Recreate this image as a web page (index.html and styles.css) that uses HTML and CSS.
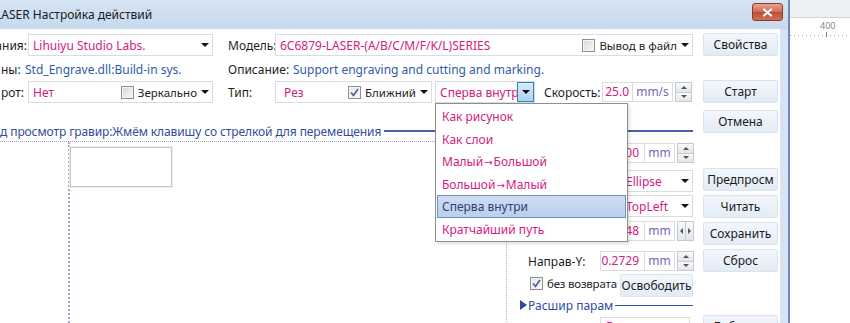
FILE: index.html
```html
<!DOCTYPE html>
<html lang="ru">
<head>
    <meta charset="UTF-8">
    <title>LASER Настройка действий</title>
    <link rel="stylesheet" href="styles.css">
</head>
<body>
    <div class="dialog">
        <div class="titlebar">
            <span class="title">LASER Настройка действий</span>
            <button class="close">
                <svg width="11" height="9" viewBox="0 0 11 9"><path d="M2 1.5 L9 7.5 M9 1.5 L2 7.5" stroke="#fff" stroke-width="2.2" stroke-linecap="round"/></svg>
            </button>
        </div>
        <div class="client">
            <div class="main">
                <div class="row row-1">
                    <span class="lbl lbl-first"><span>ания:</span></span>
                    <div class="combo combo-left">
                        <span class="val">Lihuiyu Studio Labs.</span>
                        <span class="arrow"></span>
                    </div>
                    <span class="lbl lbl-mid">Модель:</span>
                    <div class="combo combo-model">
                        <span class="val">6C6879-LASER-(A/B/C/M/F/K/L)SERIES</span>
                        <span class="check"><span class="box"></span>Вывод в файл</span>
                        <span class="arrow"></span>
                    </div>
                </div>
                <div class="row row-2">
                    <span class="lbl lbl-short">ны:</span>
                    <span class="info info-engine">Std_Engrave.dll:Build-in sys.</span>
                    <span class="lbl lbl-desc">Описание:</span>
                    <span class="info">Support engraving and cutting and marking.</span>
                </div>
                <div class="row row-3">
                    <span class="lbl lbl-first"><span>рот:</span></span>
                    <div class="combo combo-left">
                        <span class="val">Нет</span>
                        <span class="check"><span class="box"></span>Зеркально</span>
                        <span class="arrow"></span>
                    </div>
                    <span class="lbl lbl-mid">Тип:</span>
                    <div class="combo combo-type">
                        <span class="val">Рез</span>
                        <span class="check"><span class="box checked"><svg width="9" height="9" viewBox="0 0 9 9"><path d="M1 4.5 L3.5 7.5 L8 1" fill="none" stroke="#4b5f8c" stroke-width="1.6"/></svg></span>Ближний</span>
                        <span class="arrow"></span>
                    </div>
                    <div class="combo combo-order">
                        <span class="val">Сперва внутри</span>
                        <span class="drop-btn"><span class="arrow"></span></span>
                        <ul class="drop-list">
                            <li>Как рисунок</li>
                            <li>Как слои</li>
                            <li>Малый<span class="arr">→</span>Большой</li>
                            <li>Большой<span class="arr">→</span>Малый</li>
                            <li class="selected">Сперва внутри</li>
                            <li>Кратчайший путь</li>
                        </ul>
                    </div>
                    <span class="lbl lbl-speed">Скорость:</span>
                    <span class="num num-speed">25.0</span>
                    <span class="unit unit-speed">mm/s</span>
                    <span class="spin"><i class="up"></i><i class="down"></i></span>
                </div>
                <div class="group-head">
                    <span class="group-title">д просмотр гравир:Жмём клавишу со стрелкой для перемещения</span>
                    <span class="group-line"></span>
                </div>
                <div class="group-body">
                    <div class="canvas">
                        <div class="canvas-margin"></div>
                        <div class="canvas-area">
                            <div class="work-rect"></div>
                        </div>
                    </div>
                    <div class="panel">
                        <div class="prow prow-a">
                            <span class="plbl"></span>
                            <span class="num">100.00</span>
                            <span class="unit">mm</span>
                            <span class="spin"><i class="up"></i><i class="down"></i></span>
                        </div>
                        <div class="prow prow-b">
                            <span class="plbl plbl-wide"></span>
                            <div class="combo combo-small">
                                <span class="val">Ellipse</span>
                                <span class="arrow"></span>
                            </div>
                        </div>
                        <div class="prow prow-c">
                            <span class="plbl plbl-wide"></span>
                            <div class="combo combo-small">
                                <span class="val">TopLeft</span>
                                <span class="arrow"></span>
                            </div>
                        </div>
                        <div class="prow prow-d">
                            <span class="plbl"></span>
                            <span class="num">0.0548</span>
                            <span class="unit">mm</span>
                            <span class="spin spin-h"><i class="left"></i><i class="right"></i></span>
                        </div>
                        <div class="prow prow-e">
                            <span class="plbl">Направ-Y:</span>
                            <span class="num">0.2729</span>
                            <span class="unit">mm</span>
                            <span class="spin"><i class="up"></i><i class="down"></i></span>
                        </div>
                        <div class="prow prow-f">
                            <span class="check"><span class="box checked"><svg width="9" height="9" viewBox="0 0 9 9"><path d="M1 4.5 L3.5 7.5 L8 1" fill="none" stroke="#4b5f8c" stroke-width="1.6"/></svg></span>без возврата</span>
                            <button class="btn btn-free">Освободить</button>
                        </div>
                        <div class="prow prow-g">
                            <span class="tri"></span>
                            <span class="sub-title">Расшир парам</span>
                            <span class="sub-line"></span>
                        </div>
                        <div class="prow prow-h">
                            <span class="plbl">Мощн:</span>
                            <span class="num num-wide">Выкл</span>
                        </div>
                    </div>
                </div>
            </div>
            <div class="buttons">
                <button class="btn btn-props">Свойства</button>
                <button class="btn btn-start">Старт</button>
                <button class="btn btn-cancel">Отмена</button>
                <button class="btn btn-preview">Предпросм</button>
                <button class="btn">Читать</button>
                <button class="btn">Сохранить</button>
                <button class="btn">Сброс</button>
                <button class="btn btn-add">Добавить</button>
            </div>
        </div>
    </div>
    <div class="view">
        <div class="view-top"></div>
        <div class="ruler"><span class="ruler-num">400</span></div>
        <div class="view-canvas"></div>
    </div>
</body>
</html>
```

FILE: styles.css
```css
* {
    box-sizing: border-box;
}
body {
    margin: 0;
    width: 850px;
    height: 323px;
    overflow: hidden;
    display: flex;
    background: #fff;
    font-family: "Noto Sans", "Open Sans", sans-serif;
    font-size: 12px;
    color: #1e1e1e;
}

/* Window frame */
.dialog {
    width: 790px;
    height: 323px;
    flex: none;
    display: flex;
    flex-direction: column;
    background: #d5e3f2;
    border-right: 2px solid #6a8cb3;
}
.titlebar {
    height: 29px;
    flex: none;
    display: flex;
    justify-content: space-between;
    align-items: flex-start;
    background: linear-gradient(#d6e4f3, #c6d9ee);
    padding-right: 5px;
}
.title {
    margin-left: -5px;
    margin-top: 6px;
    font-size: 12px;
    color: #1a1a1a;
}
.close {
    width: 31px;
    height: 18px;
    margin-top: 3px;
    padding: 0;
    border: 1px solid #8e3b2b;
    border-radius: 3px;
    background: linear-gradient(#e3a492, #cf6b55 50%, #bf4d37 51%, #cf7258);
    display: flex;
    align-items: center;
    justify-content: center;
}
.client {
    flex: 1;
    display: flex;
    background: #fff;
    margin-right: 8px;
    overflow: hidden;
}
.main {
    width: 695px;
    flex: none;
    display: flex;
    flex-direction: column;
}

/* Top rows */
.row {
    display: flex;
    align-items: center;
    flex: none;
}
.row-1 {
    margin-top: 5px;
    height: 22px;
}
.row-2 {
    margin-top: 4px;
    height: 19px;
}
.row-3 {
    margin-top: 2px;
    height: 22px;
}
.lbl {
    flex: none;
    white-space: nowrap;
}
/* labels cut by the left edge of the shot: text ends at the box edge */
.lbl-first {
    width: 28px;
    display: flex;
    justify-content: flex-end;
    padding-right: 1px;
}
.row-3 .lbl-first {
    padding-right: 4px;
}
.lbl-short {
    width: 25px;
    padding-left: 1px;
}
.lbl-mid {
    width: 47px;
    margin-left: 15px;
}
.lbl-desc {
    width: 65px;
}
.lbl-speed {
    width: 58px;
    margin-left: 9px;
}
.info {
    color: #2f5ca8;
    white-space: nowrap;
}
.info-engine {
    width: 203px;
}

.combo {
    height: 22px;
    display: flex;
    align-items: center;
    border: 1px solid #d9dce2;
    background: #fff;
    flex: none;
    position: relative;
}
.combo .val {
    flex: 1;
    color: #d3207f;
    padding-left: 4px;
    white-space: nowrap;
    overflow: hidden;
}
.arrow {
    width: 0;
    height: 0;
    border-left: 4px solid transparent;
    border-right: 4px solid transparent;
    border-top: 4px solid #111;
    margin: 0 3px 0 4px;
    flex: none;
}
.combo-left {
    width: 185px;
}
.combo-model {
    width: 418px;
}
.combo-type {
    width: 157px;
}
.combo-type .val {
    padding-left: 8px;
}
.combo-order {
    width: 100px;
    margin-left: 3px;
}
.combo-order .val {
    padding-left: 4px;
}
.drop-btn {
    width: 17px;
    height: 20px;
    flex: none;
    display: flex;
    align-items: center;
    justify-content: center;
    background: linear-gradient(#d9ecfc, #a9d0f1);
    border: 1px solid #3c7fb1;
}
.drop-btn .arrow {
    margin: 0;
}

.check {
    display: flex;
    align-items: center;
    white-space: nowrap;
    flex: none;
    font-size: 11.5px;
}
.box {
    width: 13px;
    height: 13px;
    border: 1px solid #8f8f8f;
    background: linear-gradient(135deg, #d6d6d6, #fbfbfb);
    box-shadow: inset 0 0 0 1px #f4f4f4;
    margin-right: 4px;
    display: flex;
    align-items: center;
    justify-content: center;
}
.box.checked {
    background: linear-gradient(135deg, #e2e4ea, #fdfdfd);
}

.num {
    width: 45px;
    height: 20px;
    border: 1px solid #dcdcdc;
    color: #d3207f;
    text-align: right;
    padding-right: 5px;
    line-height: 18px;
    flex: none;
    white-space: nowrap;
    overflow: hidden;
}
.num-speed {
    width: 31px;
    padding-right: 3px;
}
.num-wide {
    width: 90px;
    text-align: left;
    padding-left: 5px;
}
.unit {
    width: 30px;
    height: 20px;
    border: 1px solid #dcdcdc;
    border-left: none;
    color: #7a63b5;
    text-align: center;
    line-height: 18px;
    flex: none;
}
.unit-speed {
    width: 40px;
}
.spin {
    width: 17px;
    height: 20px;
    margin-left: 2px;
    display: flex;
    flex-direction: column;
    flex: none;
    border: 1px solid #c3c9d1;
}
.spin i {
    flex: 1;
    display: flex;
    align-items: center;
    justify-content: center;
    background: linear-gradient(#fafafa, #e3e6ea);
}
.spin i + i {
    border-top: 1px solid #c3c9d1;
}
.spin .up::after {
    content: "";
    border-left: 3px solid transparent;
    border-right: 3px solid transparent;
    border-bottom: 3px solid #555;
}
.spin .down::after {
    content: "";
    border-left: 3px solid transparent;
    border-right: 3px solid transparent;
    border-top: 3px solid #555;
}
.spin-h {
    flex-direction: row;
}
.spin-h i + i {
    border-top: none;
    border-left: 1px solid #c3c9d1;
}
.spin-h .left::after {
    content: "";
    border-top: 3px solid transparent;
    border-bottom: 3px solid transparent;
    border-right: 3px solid #555;
}
.spin-h .right::after {
    content: "";
    border-top: 3px solid transparent;
    border-bottom: 3px solid transparent;
    border-left: 3px solid #555;
}

/* Dropdown popup */
.drop-list {
    position: absolute;
    left: -1px;
    top: 21px;
    width: 193px;
    height: 139px;
    margin: 0;
    padding: 1px 0 0;
    list-style: none;
    background: #fff;
    border: 1px solid #8e8e8e;
    box-shadow: 2px 2px 3px rgba(0, 0, 0, 0.12);
    z-index: 10;
}
.drop-list li {
    height: 22.6px;
    line-height: 22px;
    padding-left: 4px;
    margin: 0 1px;
    color: #d3207f;
    border: 1px solid transparent;
    white-space: nowrap;
}
.drop-list li.selected {
    background: linear-gradient(#cddcf3, #bccfee);
    border-color: #6f8fc7;
    color: #30416e;
}
.arr {
    font-family: "DejaVu Sans", sans-serif;
    font-size: 10px;
    margin: 0 1px;
}

/* Group section */
.group-head {
    margin-top: 20px;
    height: 16px;
    display: flex;
    align-items: center;
    flex: none;
}
.group-title {
    color: #2e4d9c;
    white-space: nowrap;
    letter-spacing: -0.1px;
}
.group-line {
    flex: 1;
    height: 2px;
    margin-left: 3px;
    margin-right: 2px;
    background: #4a60a8;
}
.group-body {
    flex: 1;
    display: flex;
}
.canvas {
    width: 507px;
    margin-top: 2px;
    display: flex;
    border-top: 1px dotted #9aa3cc;
    border-right: 1px dotted #aab0d2;
}
.canvas-margin {
    width: 70px;
    border-right: 2px dotted #a3abd0;
}
.canvas-area {
    flex: 1;
}
.work-rect {
    width: 102px;
    height: 40px;
    margin-top: 5px;
    border: 1px solid #c6c6c6;
    box-shadow: 0 0 0 1px #ececec;
}

/* Right panel */
.panel {
    width: 186px;
    display: flex;
    flex-direction: column;
    padding-left: 21px;
}
.prow {
    display: flex;
    align-items: center;
    flex: none;
}
.plbl {
    width: 72px;
    white-space: nowrap;
    flex: none;
}
.plbl-wide {
    width: 94px;
}
.prow-a {
    margin-top: 4px;
    height: 20px;
}
.prow-b {
    margin-top: 7px;
    height: 22px;
}
.prow-c {
    margin-top: 3px;
    height: 22px;
}
.prow-d {
    margin-top: 3px;
    height: 22px;
}
.prow-e {
    margin-top: 8px;
    height: 22px;
}
.prow-f {
    margin-top: 1px;
    height: 20px;
    padding-left: 2px;
}
.prow-g {
    margin-top: 5px;
    height: 14px;
    margin-left: -8px;
}
.prow-h {
    margin-top: 4px;
    height: 22px;
}
.combo-small {
    width: 71px;
}
.combo-small .val {
    padding-left: 3px;
}
.prow-f .check {
    width: 90px;
    letter-spacing: -0.2px;
}
.btn-free {
    width: 73px;
    height: 20px;
}
.tri {
    width: 0;
    height: 0;
    border-top: 5px solid transparent;
    border-bottom: 5px solid transparent;
    border-left: 7px solid #2b4aa0;
    margin-right: 1px;
}
.sub-title {
    color: #2e4d9c;
    white-space: nowrap;
}
.sub-line {
    flex: 1;
    height: 1px;
    margin-left: 2px;
    background: #3b55a0;
}

/* Buttons column */
.buttons {
    width: 75px;
    margin-left: 8px;
    display: flex;
    flex-direction: column;
}
.btn {
    height: 23px;
    flex: none;
    padding: 0;
    font-family: inherit;
    font-size: 12px;
    color: #1b1b1b;
    border: 1px solid #dae4ef;
    border-radius: 2px;
    background: linear-gradient(#f3f7fc, #e2ecf6);
    margin-top: 4px;
    white-space: nowrap;
}
.btn-props {
    margin-top: 4px;
}
.btn-start {
    margin-top: 24px;
}
.btn-cancel {
    margin-top: 7px;
}
.btn-preview {
    margin-top: 35px;
}
.btn-add {
    margin-top: 43px;
}

/* Main window behind */
.view {
    flex: 1;
    display: flex;
    flex-direction: column;
}
.view-top {
    height: 18px;
    background: #edf0f3;
    border-bottom: 1px solid #cfd3d8;
}
.ruler {
    height: 19px;
    background: #fff;
    background-image: repeating-linear-gradient(90deg, #9a9a9a 0 1px, transparent 1px 4px);
    background-size: 100% 1px;
    background-repeat: no-repeat;
    background-position: 0 17px;
    padding-left: 30px;
}
.ruler-num {
    display: block;
    font-size: 9px;
    color: #8a8a8a;
    line-height: 10px;
    margin-top: 3px;
}
.ruler-num::after {
    content: "";
    display: block;
    width: 1px;
    height: 5px;
    margin: 1px 0 0 6px;
    background: #8a8a8a;
}
.view-canvas {
    flex: 1;
    background: #fff;
}
```
